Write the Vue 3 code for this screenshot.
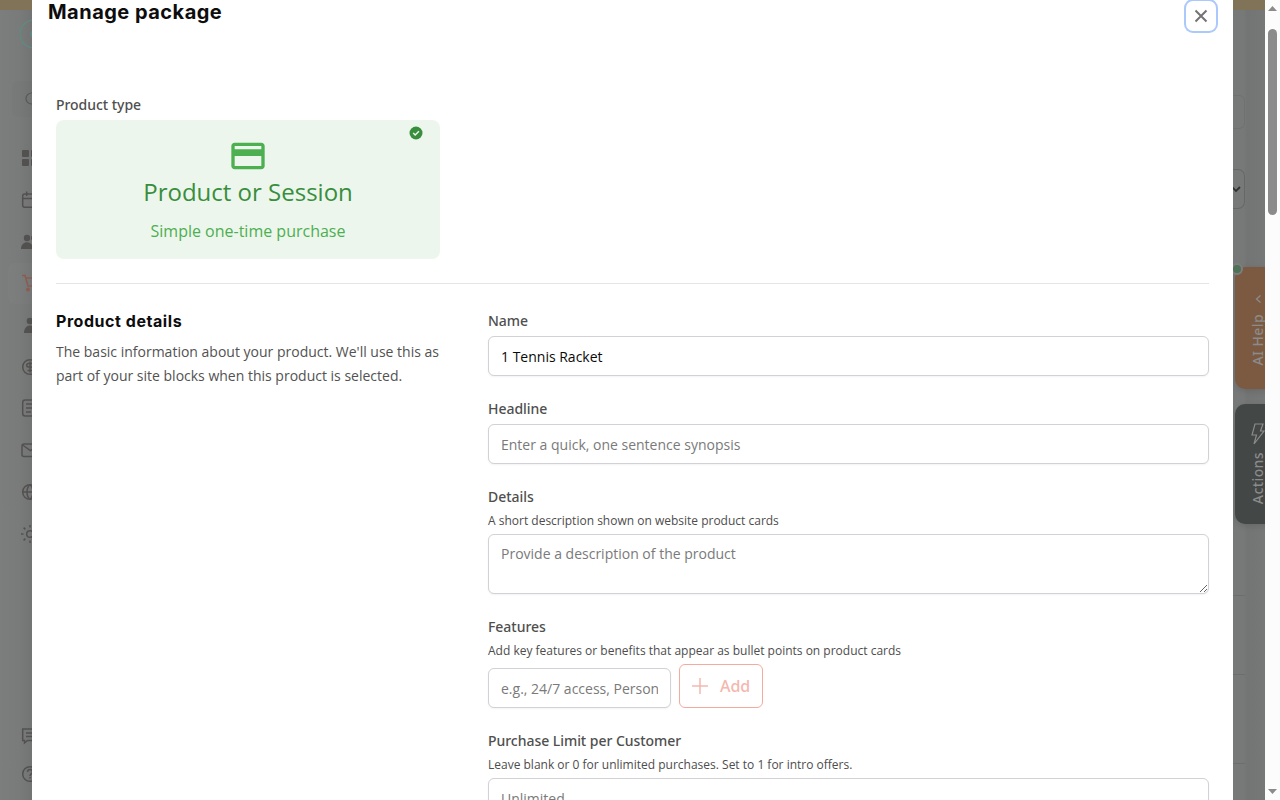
<script setup>
import { ref } from 'vue'

const name = ref('1 Tennis Racket')
const headline = ref('')
const details = ref('')
const feature = ref('')
const limit = ref('')

const navItems = ['dashboard', 'calendar', 'people', 'cart', 'person', 'billing', 'list', 'mail', 'globe', 'settings']
const footerItems = ['chat', 'help']
</script>

<template>
  <div class="screen">
    <aside class="rail">
      <div class="rail-bar"></div>
      <div class="rail-logo">
        <svg width="32" height="32" viewBox="0 0 32 32" fill="none" stroke="#5f8a82" stroke-width="1.4">
          <circle cx="15" cy="16" r="14" />
          <path d="M13.500 13l-1.500 3 1.500 3" stroke-width="2" />
        </svg>
      </div>
      <div class="rail-search">
        <svg width="16" height="16" viewBox="0 0 16 16" fill="none" stroke="#585857" stroke-width="1.2">
          <circle cx="6.5" cy="6.5" r="5.5" />
          <path d="M11 11l4 4" />
        </svg>
      </div>
      <nav class="rail-nav">
        <div v-for="item in navItems" :key="item" class="rail-item" :class="{ active: item === 'cart' }">
          <svg width="20" height="20" viewBox="0 0 20 20" fill="none" stroke="currentColor" stroke-width="1.5">
            <g v-if="item === 'dashboard'" fill="currentColor" stroke="none">
              <rect x="2" y="2" width="7" height="7" rx="1" />
              <rect x="11" y="2" width="7" height="7" rx="1" />
              <rect x="2" y="11" width="7" height="7" rx="1" />
              <rect x="11" y="11" width="7" height="7" rx="1" />
            </g>
            <template v-else-if="item === 'calendar'">
              <rect x="2.7" y="4" width="15" height="13.3" rx="2" />
              <path d="M6.7 1.5v4.5M13.5 1.5v4.5M2.7 8.5h15" />
            </template>
            <g v-else-if="item === 'people'" fill="currentColor" stroke="none">
              <circle cx="7" cy="6" r="3.2" />
              <path d="M1 17c0-9 12-9 12 0z" />
              <circle cx="14" cy="6" r="3" />
              <path d="M14 17c0-3-.6-4.500-2-6 4-1.500 7 1 7 6z" />
            </g>
            <template v-else-if="item === 'cart'">
              <path d="M2 2.500h3l3 10.500h8l2-8H6" />
              <circle cx="8" cy="16.500" r="1.200" fill="currentColor" />
              <circle cx="15" cy="16.500" r="1.200" fill="currentColor" />
            </template>
            <g v-else-if="item === 'person'" fill="currentColor" stroke="none">
              <circle cx="10" cy="6" r="3.300" />
              <path d="M4 18c0-10 12-10 12 0z" />
            </g>
            <template v-else-if="item === 'billing'">
              <circle cx="10" cy="10" r="7.300" />
              <path d="M12.500 6.500H8.500a1.700 1.700 0 0 0 0 3.500h3a1.700 1.700 0 0 1 0 3.500h-4M10 4.500v11" />
            </template>
            <template v-else-if="item === 'list'">
              <rect x="2.700" y="2" width="15" height="16" rx="2.500" />
              <path d="M6 6h8M6 10h8M6 14h5" />
            </template>
            <template v-else-if="item === 'mail'">
              <rect x="2" y="4" width="17" height="12.500" rx="2" />
              <path d="M2.500 5l8 5.500 8-5.500" />
            </template>
            <template v-else-if="item === 'globe'">
              <circle cx="10" cy="10" r="7.300" />
              <path d="M2.700 10h14.600M10 2.700c-4 3-4 11.600 0 14.600M10 2.700c4 3 4 11.600 0 14.600" />
            </template>
            <template v-else>
              <circle cx="10" cy="10" r="3.300" />
              <path d="M1 10h2.500M10 1v2.500M10 16.500V19M3.600 3.600l1.800 1.800M3.600 16.400l1.800-1.800" />
            </template>
          </svg>
        </div>
      </nav>
      <div class="rail-footer">
        <div v-for="item in footerItems" :key="item" class="rail-help">
          <svg width="20" height="20" viewBox="0 0 20 20" fill="none" stroke="currentColor" stroke-width="1.5">
            <template v-if="item === 'chat'">
              <path d="M2.700 3h15v11.500H7.500L4.500 17v-2.500H2.700z" />
              <path d="M6 7h8M6 10.500h8" />
            </template>
            <template v-else>
              <circle cx="10" cy="10" r="7.300" />
              <path d="M7.500 8c0-3.500 5-3.500 5 0 0 2-2.500 1.800-2.500 4M10 13v1.500" />
            </template>
          </svg>
        </div>
      </div>
    </aside>

    <main class="modal">
      <header class="modal-header">
        <h2>Manage package</h2>
        <button class="close-btn" type="button" aria-label="Close">
          <svg width="14" height="14" viewBox="0 0 14 14" fill="none" stroke="#737373" stroke-width="2">
            <path d="M1.500 1.500l11 11M12.500 1.500l-11 11" />
          </svg>
        </button>
      </header>

      <div class="modal-body">
        <section class="type-section">
          <span class="label">Product type</span>
          <div class="type-card">
            <svg class="type-check" width="14" height="14" viewBox="0 0 14 14">
              <circle cx="7" cy="7" r="6.500" fill="#388e3c" />
              <path d="M4.200 7l2 2 3.700-3.700" fill="none" stroke="#edf6ed" stroke-width="1.500" />
            </svg>
            <svg width="40" height="40" viewBox="0 0 24 24" fill="#4caf50">
              <path d="M20 4H4c-1.110 0-1.990.890-1.990 2L2 18c0 1.110.890 2 2 2h16c1.110 0 2-.890 2-2V6c0-1.110-.890-2-2-2zm0 14H4v-6h16v6zm0-10H4V6h16v2z" />
            </svg>
            <span class="type-title">Product or Session</span>
            <span class="type-text">Simple one-time purchase</span>
          </div>
        </section>

        <section class="details-section">
          <div class="intro">
            <h3>Product details</h3>
            <p>The basic information about your product. We'll use this as part of your site blocks when this product is selected.</p>
          </div>

          <form class="form" @submit.prevent>
            <div class="field">
              <label class="label">Name</label>
              <input v-model="name" class="input" type="text" />
            </div>
            <div class="field">
              <label class="label">Headline</label>
              <input v-model="headline" class="input" type="text" placeholder="Enter a quick, one sentence synopsis" />
            </div>
            <div class="field">
              <label class="label">Details</label>
              <span class="hint">A short description shown on website product cards</span>
              <textarea v-model="details" class="input textarea" placeholder="Provide a description of the product"></textarea>
            </div>
            <div class="field">
              <label class="label">Features</label>
              <span class="hint">Add key features or benefits that appear as bullet points on product cards</span>
              <div class="feature-row">
                <input v-model="feature" class="input feature-input" type="text" placeholder="e.g., 24/7 access, Personal trainer" />
                <button class="add-btn" type="button">
                  <svg width="16" height="16" viewBox="0 0 16 16" stroke="currentColor" stroke-width="1.500">
                    <path d="M8 0v16M0 8h16" />
                  </svg>
                  Add
                </button>
              </div>
            </div>
            <div class="field">
              <label class="label">Purchase Limit per Customer</label>
              <span class="hint">Leave blank or 0 for unlimited purchases. Set to 1 for intro offers.</span>
              <input v-model="limit" class="input" type="text" placeholder="Unlimited" />
            </div>
          </form>
        </section>
      </div>
    </main>

    <aside class="backdrop">
      <div class="backdrop-bar"></div>
      <div class="ghost-search"></div>
      <div class="ghost-select">
        <svg width="10" height="8" viewBox="0 0 10 8" fill="none" stroke="#303231" stroke-width="1.800">
          <path d="M1 2l4 4 4-4" />
        </svg>
      </div>
      <div class="ghost-rows">
        <div></div>
        <div></div>
        <div class="tall"></div>
      </div>
      <div class="side-tab ai-tab">
        <span class="status-dot"></span>
        <span class="tab-text">AI Help</span>
        <svg width="10" height="10" viewBox="0 0 10 10" fill="none" stroke="currentColor" stroke-width="1.300">
          <path d="M7.500 1.500L3.500 5l4 3.500" />
        </svg>
      </div>
      <div class="side-tab actions-tab">
        <span class="tab-text">Actions</span>
        <svg width="14" height="22" viewBox="0 0 14 22" fill="none" stroke="currentColor" stroke-width="1.200">
          <path d="M4 1h8l-2.500 7H13L3 21l2.500-9H1z" />
        </svg>
      </div>
    </aside>

    <div class="scrollbar">
      <svg width="9" height="5" viewBox="0 0 9 5"><path d="M0 5l4.500-5L9 5z" fill="#8b8b8b" /></svg>
      <div class="thumb"></div>
      <svg class="arrow-down" width="9" height="5" viewBox="0 0 9 5"><path d="M0 0l4.500 5L9 0z" fill="#8b8b8b" /></svg>
    </div>
  </div>
</template>

<style>
body {
  margin: 0;
  overflow: hidden;
}
</style>

<style scoped>
.screen {
  display: flex;
  width: 1280px;
  height: 800px;
  overflow: hidden;
  font-family: 'Open Sans', sans-serif;
  background: #fff;
}

.screen * {
  box-sizing: border-box;
}

.rail {
  display: flex;
  flex-direction: column;
  flex: 0 0 32px;
  overflow: hidden;
  background: linear-gradient(90deg, #7c7e7d 0, #797b7a 60%, #727473 100%);
  color: #525150;
}

.rail-bar,
.backdrop-bar {
  flex: 0 0 10px;
  height: 10px;
  background: #817358;
}

.rail-logo {
  height: 50px;
  padding: 8px 0 0 19px;
}

.rail-logo svg {
  display: block;
}

.rail-search {
  height: 36px;
  margin: 21px 0 0 12px;
  padding: 10px 0 0 13px;
  border-radius: 6px 0 0 6px;
  background: rgba(0, 0, 0, 0.015);
}

.rail-nav {
  margin-top: 20.5px;
}

.rail-item {
  display: flex;
  align-items: center;
  height: 41.7px;
  padding-left: 20px;
}

.rail-item svg,
.rail-help svg,
.rail-search svg {
  flex: none;
}

.rail-item.active {
  margin-left: 8px;
  padding-left: 12px;
  border-radius: 6px 0 0 6px;
  background: rgba(255, 255, 255, 0.015);
  color: #8c5b50;
}

.rail-footer {
  margin-top: auto;
  padding-bottom: 7px;
}

.rail-help {
  display: flex;
  align-items: center;
  height: 38px;
  padding-left: 20px;
}

.modal {
  flex: 0 0 1201px;
  overflow: hidden;
  background: #fff;
}

.modal-header {
  display: flex;
  justify-content: space-between;
  height: 32px;
  padding: 0 16px;
}

.modal-header h2 {
  margin: 0;
  font-family: Inter, sans-serif;
  font-size: 20px;
  font-weight: 700;
  line-height: 24px;
  letter-spacing: 0.48px;
  color: #0d0d0d;
}

.close-btn {
  display: flex;
  align-items: center;
  justify-content: center;
  width: 30px;
  height: 30px;
  margin: 1px 1px 0 0;
  padding: 0;
  border: 0;
  border-radius: 7px;
  background: #fff;
  box-shadow: 0 0 0 2px #abc9fb;
}

.modal-body {
  padding: 64px 24px 0;
}

.label {
  display: block;
  font-family: 'Noto Sans', sans-serif;
  font-size: 14px;
  font-weight: 500;
  line-height: 18px;
  height: 20px;
  letter-spacing: -0.04px;
  color: #4f4f4f;
}

.type-section {
  padding-bottom: 24px;
  border-bottom: 1px solid #e5e5e5;
}

.type-card {
  position: relative;
  display: flex;
  flex-direction: column;
  align-items: center;
  width: 384px;
  height: 139px;
  margin-top: 4px;
  padding-top: 16px;
  border-radius: 8px;
  background: #edf6ed;
}

.type-check {
  position: absolute;
  top: 6px;
  right: 17px;
}

.type-title {
  font-size: 24px;
  line-height: 32px;
  color: #388e3c;
}

.type-text {
  margin-top: 11px;
  font-size: 16px;
  line-height: 24px;
  color: #4caf50;
}

.details-section {
  display: grid;
  grid-template-columns: 384px 721px;
  column-gap: 48px;
  padding-top: 28px;
}

.intro h3 {
  margin: 0;
  font-family: Inter, sans-serif;
  font-size: 16px;
  font-weight: 700;
  line-height: 18px;
  letter-spacing: 0.55px;
  color: #0d0d0d;
}

.intro p {
  margin: 10px 0 0;
  font-size: 14px;
  line-height: 24px;
  color: #525252;
}

.form {
  display: flex;
  flex-direction: column;
  gap: 24px;
}

.field {
  display: flex;
  flex-direction: column;
  gap: 4px;
}

.hint {
  font-size: 12px;
  line-height: 18px;
  color: #4d4d4d;
}

.input {
  display: block;
  width: 100%;
  height: 40px;
  margin: 0;
  padding: 8px 12px;
  border: 1px solid #d1d1d6;
  border-radius: 6px;
  outline: none;
  background: #fff;
  box-shadow: 0 1px 2px rgba(0, 0, 0, 0.05);
  font-family: inherit;
  font-size: 14px;
  line-height: 20px;
  color: #0a0a0a;
}

.input::placeholder {
  color: #7a7a7a;
  opacity: 1;
}

.textarea {
  height: 60px;
  padding-top: 9px;
}

.feature-row {
  display: flex;
  align-items: flex-end;
  gap: 8px;
}

.feature-input {
  width: 183px;
}

.add-btn {
  display: flex;
  align-items: center;
  gap: 12px;
  width: 84px;
  height: 44px;
  padding: 0 12px;
  border: 1px solid #f5aa9e;
  border-radius: 6px;
  background: #fff;
  font-family: 'Noto Sans', sans-serif;
  font-size: 16px;
  font-weight: 500;
  letter-spacing: -0.05px;
  color: #f3b8ae;
}

.add-btn svg {
  flex: none;
}

.backdrop {
  position: relative;
  flex: 0 0 32px;
  overflow: hidden;
  background: linear-gradient(90deg, #777978 0, #777978 11px, #737574 14px, #767877 100%);
}

.ghost-search {
  width: 12px;
  height: 34px;
  margin-top: 85px;
  border: 1px solid #707271;
  border-left: 0;
  border-radius: 0 6px 6px 0;
}

.ghost-select {
  display: flex;
  align-items: center;
  width: 12px;
  height: 40px;
  margin-top: 40px;
  border: 1px solid #666867;
  border-left: 0;
  border-radius: 0 7px 7px 0;
}

.ghost-select svg {
  flex: none;
  margin-left: -2px;
}

.ghost-rows {
  width: 12px;
  margin-top: 308px;
}

.ghost-rows div {
  height: 79px;
  border-bottom: 1px solid #6c6e6d;
}

.ghost-rows .tall {
  height: 89px;
}

.side-tab {
  position: absolute;
  left: 2px;
  display: flex;
  flex-direction: column-reverse;
  align-items: center;
  width: 46px;
  color: #8b8b8b;
  box-shadow: 0 2px 6px rgba(0, 0, 0, 0.12);
}

.side-tab svg {
  flex: none;
}

.tab-text {
  writing-mode: vertical-rl;
  transform: rotate(180deg);
  font-family: 'Noto Sans', sans-serif;
  font-size: 14px;
  font-weight: 500;
  line-height: 14px;
  letter-spacing: 0.4px;
}

.ai-tab {
  top: 267px;
  height: 122px;
  padding-bottom: 23px;
  gap: 10px;
  border-radius: 10px 0 0 10px;
  background: #7c5a42;
}

.actions-tab {
  top: 404px;
  height: 120px;
  padding-bottom: 20px;
  gap: 7px;
  border-radius: 10px 0 0 10px;
  background: #434746;
}

.status-dot {
  position: absolute;
  top: -4px;
  left: -4px;
  width: 12px;
  height: 12px;
  border: 2px solid #7d7f7e;
  border-radius: 50%;
  background: #4e7158;
}

.scrollbar {
  display: flex;
  flex-direction: column;
  align-items: center;
  flex: 0 0 15px;
  padding: 6px 0;
  background: #fcfcfc;
}

.thumb {
  width: 9px;
  height: 186px;
  margin-top: 18px;
  border-radius: 5px;
  background: #8b8b8b;
}

.arrow-down {
  margin-top: auto;
}
</style>
